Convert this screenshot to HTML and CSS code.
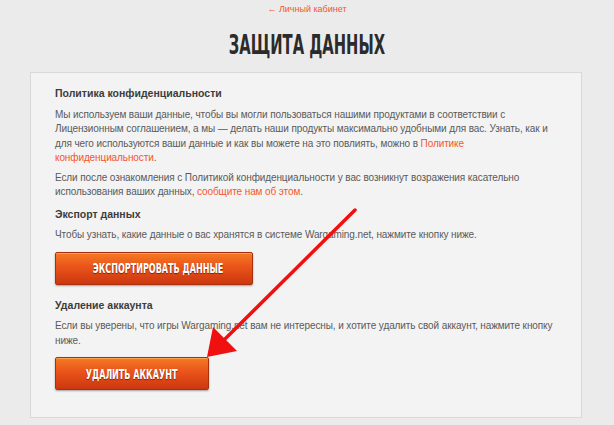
FILE: index.html
```html
<!DOCTYPE html>
<html lang="ru">
<head>
  <meta charset="UTF-8" />
  <title>Защита данных</title>
  <link rel="stylesheet" href="styles.css">
</head>
<body>
  <div class="page">
    <a class="back" href="#">← Личный кабинет</a>
    <h1><span>Защита данных</span></h1>

    <div class="card">
      <h2>Политика конфиденциальности</h2>
      <p>Мы используем ваши данные, чтобы вы могли пользоваться нашими продуктами в соответствии с Лицензионным соглашением, а мы — делать наши продукты максимально удобными для вас. Узнать, как и для чего используются ваши данные и как вы можете на это повлиять, можно в <a href="#">Политике конфиденциальности</a>.</p>
      <p>Если после ознакомления с Политикой конфиденциальности у вас возникнут возражения касательно использования ваших данных, <a href="#">сообщите нам об этом</a>.</p>

      <h2>Экспорт данных</h2>
      <p>Чтобы узнать, какие данные о вас хранятся в системе Wargaming.net, нажмите кнопку ниже.</p>
      <button class="btn btn-export"><span>Экспортировать данные</span></button>

      <h2>Удаление аккаунта</h2>
      <p>Если вы уверены, что игры Wargaming.net вам не интересны, и хотите удалить свой аккаунт, нажмите кнопку ниже.</p>
      <button class="btn btn-delete"><span>Удалить аккаунт</span></button>
    </div>

    <!-- red arrow annotation drawn over the screenshot -->
    <svg class="arrow" width="614" height="425" viewBox="0 0 614 425">
      <line x1="355" y1="210" x2="222" y2="342" stroke="#f01010" stroke-width="3.5" stroke-linecap="round"/>
      <polygon points="207,357 213,327 237,351" fill="#f01010"/>
    </svg>
  </div>
</body>
</html>
```

FILE: styles.css
```css
body {
  margin: 0;
  background: #ebebeb;
  font-family: 'Liberation Sans', Arial, sans-serif;
  color: #5a5a5a;
}
.page {
  position: relative;
  width: 614px;
  height: 425px;
  overflow: hidden;
}
.back {
  display: block;
  text-align: center;
  font-size: 9px;
  line-height: 12px;
  padding-top: 3px;
  color: #f3562a;
  text-decoration: none;
}
h1 {
  margin: 15px 0 0;
  text-align: center;
  font-family: 'DejaVu Sans Condensed', 'DejaVu Sans', sans-serif;
  font-weight: bold;
  font-size: 26px;
  line-height: 30px;
  color: #2b2b2b;
  text-transform: uppercase;
  white-space: nowrap;
}
h1 span {
  display: inline-block;
  transform: scaleX(0.63);
}
.card {
  margin: 12px 0 0 30px;
  width: 504px;
  padding: 13px 22px 27px 24px;
  background: #f3f3f3;
  border: 1px solid #d9d9d9;
}
h2 {
  margin: 7px 0 7.5px;
  font-size: 10.5px;
  line-height: 14px;
  font-weight: bold;
  color: #3c3c3c;
}
h2:first-child {
  margin-top: 0;
}
p {
  margin: 0 0 5px;
  font-size: 10px;
  line-height: 14.5px;
  letter-spacing: -0.1px;
}
p a {
  color: #f3562a;
  text-decoration: none;
}
.btn {
  display: block;
  height: 33px;
  margin: 9px 0 13px;
  padding: 0;
  border: 1px solid #a8300c;
  border-radius: 2px;
  background: linear-gradient(to bottom, #f57a22, #ea531a 45%, #cc370f);
  box-shadow: 0 1px 2px rgba(0, 0, 0, 0.35), inset 0 1px 0 rgba(255, 190, 120, 0.6);
  color: #fff;
  font-family: 'DejaVu Sans Condensed', 'DejaVu Sans', sans-serif;
  font-weight: bold;
  font-size: 14px;
  text-transform: uppercase;
  text-shadow: 0 1px 1px rgba(90, 20, 0, 0.7);
  white-space: nowrap;
  cursor: pointer;
}
.btn span {
  display: inline-block;
  transform: scaleX(0.64);
}
.btn-export {
  width: 198px;
}
.btn-delete {
  width: 154px;
  margin-bottom: 0;
}
.arrow {
  position: absolute;
  left: 0;
  top: 0;
  pointer-events: none;
}
```
